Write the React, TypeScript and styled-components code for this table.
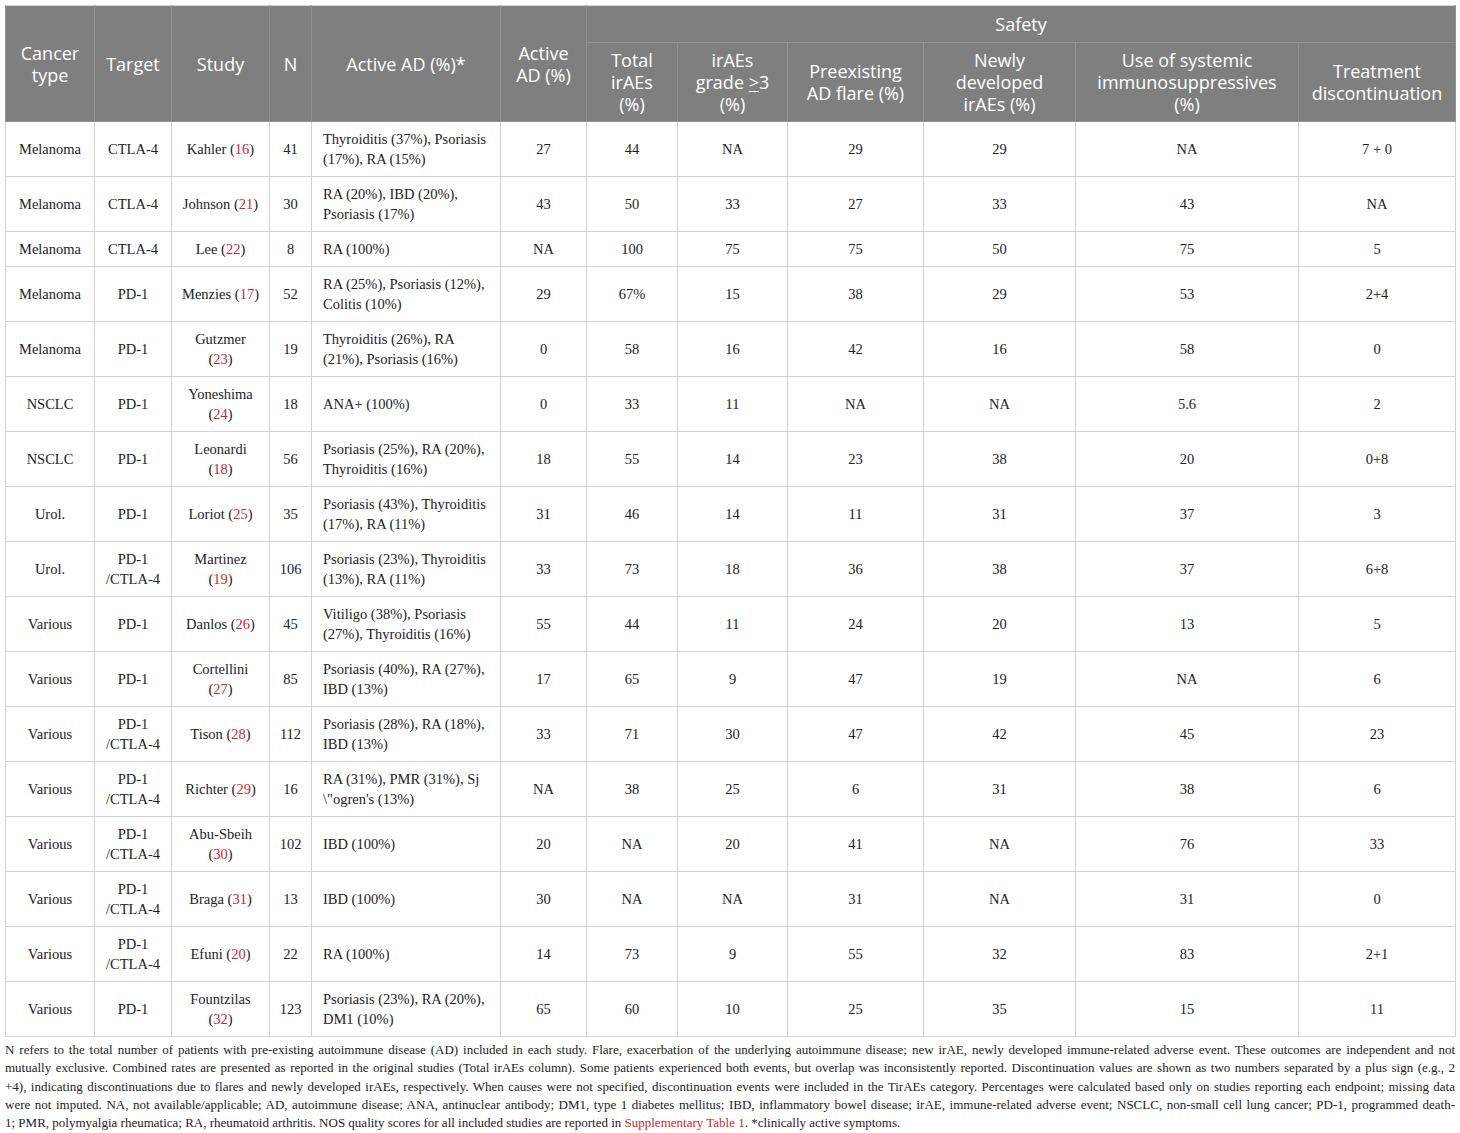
import { FC } from "react";
import styled, { createGlobalStyle } from "styled-components";

const GlobalStyle = createGlobalStyle`
  body {
    margin: 0;
    background: #ffffff;
  }
`;

interface IStudy {
  cancer: string;
  target: string[];
  study: string;
  ref: number;
  splitStudy?: boolean;
  n: number;
  active: string[];
  activePct: string;
  total: string;
  grade3: string;
  flare: string;
  newly: string;
  immuno: string;
  discontinuation: string;
}

const STUDIES: IStudy[] = [
  { cancer: "Melanoma", target: ["CTLA-4"], study: "Kahler", ref: 16, n: 41, active: ["Thyroiditis (37%), Psoriasis", "(17%), RA (15%)"], activePct: "27", total: "44", grade3: "NA", flare: "29", newly: "29", immuno: "NA", discontinuation: "7 + 0" },
  { cancer: "Melanoma", target: ["CTLA-4"], study: "Johnson", ref: 21, n: 30, active: ["RA (20%), IBD (20%),", "Psoriasis (17%)"], activePct: "43", total: "50", grade3: "33", flare: "27", newly: "33", immuno: "43", discontinuation: "NA" },
  { cancer: "Melanoma", target: ["CTLA-4"], study: "Lee", ref: 22, n: 8, active: ["RA (100%)"], activePct: "NA", total: "100", grade3: "75", flare: "75", newly: "50", immuno: "75", discontinuation: "5" },
  { cancer: "Melanoma", target: ["PD-1"], study: "Menzies", ref: 17, n: 52, active: ["RA (25%), Psoriasis (12%),", "Colitis (10%)"], activePct: "29", total: "67%", grade3: "15", flare: "38", newly: "29", immuno: "53", discontinuation: "2+4" },
  { cancer: "Melanoma", target: ["PD-1"], study: "Gutzmer", ref: 23, splitStudy: true, n: 19, active: ["Thyroiditis (26%), RA", "(21%), Psoriasis (16%)"], activePct: "0", total: "58", grade3: "16", flare: "42", newly: "16", immuno: "58", discontinuation: "0" },
  { cancer: "NSCLC", target: ["PD-1"], study: "Yoneshima", ref: 24, splitStudy: true, n: 18, active: ["ANA+ (100%)"], activePct: "0", total: "33", grade3: "11", flare: "NA", newly: "NA", immuno: "5.6", discontinuation: "2" },
  { cancer: "NSCLC", target: ["PD-1"], study: "Leonardi", ref: 18, splitStudy: true, n: 56, active: ["Psoriasis (25%), RA (20%),", "Thyroiditis (16%)"], activePct: "18", total: "55", grade3: "14", flare: "23", newly: "38", immuno: "20", discontinuation: "0+8" },
  { cancer: "Urol.", target: ["PD-1"], study: "Loriot", ref: 25, n: 35, active: ["Psoriasis (43%), Thyroiditis", "(17%), RA (11%)"], activePct: "31", total: "46", grade3: "14", flare: "11", newly: "31", immuno: "37", discontinuation: "3" },
  { cancer: "Urol.", target: ["PD-1", "/CTLA-4"], study: "Martinez", ref: 19, splitStudy: true, n: 106, active: ["Psoriasis (23%), Thyroiditis", "(13%), RA (11%)"], activePct: "33", total: "73", grade3: "18", flare: "36", newly: "38", immuno: "37", discontinuation: "6+8" },
  { cancer: "Various", target: ["PD-1"], study: "Danlos", ref: 26, n: 45, active: ["Vitiligo (38%), Psoriasis", "(27%), Thyroiditis (16%)"], activePct: "55", total: "44", grade3: "11", flare: "24", newly: "20", immuno: "13", discontinuation: "5" },
  { cancer: "Various", target: ["PD-1"], study: "Cortellini", ref: 27, splitStudy: true, n: 85, active: ["Psoriasis (40%), RA (27%),", "IBD (13%)"], activePct: "17", total: "65", grade3: "9", flare: "47", newly: "19", immuno: "NA", discontinuation: "6" },
  { cancer: "Various", target: ["PD-1", "/CTLA-4"], study: "Tison", ref: 28, n: 112, active: ["Psoriasis (28%), RA (18%),", "IBD (13%)"], activePct: "33", total: "71", grade3: "30", flare: "47", newly: "42", immuno: "45", discontinuation: "23" },
  { cancer: "Various", target: ["PD-1", "/CTLA-4"], study: "Richter", ref: 29, n: 16, active: ["RA (31%), PMR (31%), Sj", "\\\"ogren's (13%)"], activePct: "NA", total: "38", grade3: "25", flare: "6", newly: "31", immuno: "38", discontinuation: "6" },
  { cancer: "Various", target: ["PD-1", "/CTLA-4"], study: "Abu-Sbeih", ref: 30, splitStudy: true, n: 102, active: ["IBD (100%)"], activePct: "20", total: "NA", grade3: "20", flare: "41", newly: "NA", immuno: "76", discontinuation: "33" },
  { cancer: "Various", target: ["PD-1", "/CTLA-4"], study: "Braga", ref: 31, n: 13, active: ["IBD (100%)"], activePct: "30", total: "NA", grade3: "NA", flare: "31", newly: "NA", immuno: "31", discontinuation: "0" },
  { cancer: "Various", target: ["PD-1", "/CTLA-4"], study: "Efuni", ref: 20, n: 22, active: ["RA (100%)"], activePct: "14", total: "73", grade3: "9", flare: "55", newly: "32", immuno: "83", discontinuation: "2+1" },
  { cancer: "Various", target: ["PD-1"], study: "Fountzilas", ref: 32, splitStudy: true, n: 123, active: ["Psoriasis (23%), RA (20%),", "DM1 (10%)"], activePct: "65", total: "60", grade3: "10", flare: "25", newly: "35", immuno: "15", discontinuation: "11" },
];

const COLUMNS = [89, 77, 98, 42, 189, 86, 91, 110, 136, 152, 223, 157];

const Lines: FC<{ lines: string[] }> = ({ lines }) => (
  <>
    {lines.map((line, i) => (
      <Line key={i}>{line}</Line>
    ))}
  </>
);

const App: FC = () => {
  return (
    <Page>
      <GlobalStyle />
      <Table>
        <colgroup>
          {COLUMNS.map((w, i) => (
            <col key={i} style={{ width: w }} />
          ))}
        </colgroup>
        <thead>
          <tr>
            <HeadCell rowSpan={2}>
              <Lines lines={["Cancer", "type"]} />
            </HeadCell>
            <HeadCell rowSpan={2}>Target</HeadCell>
            <HeadCell rowSpan={2}>Study</HeadCell>
            <HeadCell rowSpan={2}>N</HeadCell>
            <HeadCell rowSpan={2}>Active AD (%)*</HeadCell>
            <HeadCell rowSpan={2}>
              <Lines lines={["Active", "AD (%)"]} />
            </HeadCell>
            <GroupCell colSpan={6}>Safety</GroupCell>
          </tr>
          <tr>
            <HeadCell>
              <Lines lines={["Total", "irAEs", "(%)"]} />
            </HeadCell>
            <HeadCell>
              <Line>irAEs</Line>
              <Line>
                grade <Under>&gt;</Under>3
              </Line>
              <Line>(%)</Line>
            </HeadCell>
            <HeadCell>
              <Lines lines={["Preexisting", "AD flare (%)"]} />
            </HeadCell>
            <HeadCell>
              <Lines lines={["Newly", "developed", "irAEs (%)"]} />
            </HeadCell>
            <HeadCell>
              <Lines lines={["Use of systemic", "immunosuppressives", "(%)"]} />
            </HeadCell>
            <HeadCell>
              <Lines lines={["Treatment", "discontinuation"]} />
            </HeadCell>
          </tr>
        </thead>
        <tbody>
          {STUDIES.map((s, index) => (
            <tr key={index}>
              <Cell>{s.cancer}</Cell>
              <Cell>
                <Lines lines={s.target} />
              </Cell>
              <Cell>
                {s.splitStudy ? (
                  <>
                    <Line>{s.study}</Line>
                    <Line>
                      (<Ref>{s.ref}</Ref>)
                    </Line>
                  </>
                ) : (
                  <Line>
                    {s.study} (<Ref>{s.ref}</Ref>)
                  </Line>
                )}
              </Cell>
              <Cell>{s.n}</Cell>
              <Cell $left>
                <Lines lines={s.active} />
              </Cell>
              <Cell>{s.activePct}</Cell>
              <Cell>{s.total}</Cell>
              <Cell>{s.grade3}</Cell>
              <Cell>{s.flare}</Cell>
              <Cell>{s.newly}</Cell>
              <Cell>{s.immuno}</Cell>
              <Cell>{s.discontinuation}</Cell>
            </tr>
          ))}
        </tbody>
      </Table>
      <Footnote>
        <FootLine>
          N refers to the total number of patients with pre-existing autoimmune disease (AD) included in each study. Flare, exacerbation of the underlying autoimmune disease; new irAE, newly developed immune-related adverse event. These outcomes are independent and not
        </FootLine>
        <FootLine>
          mutually exclusive. Combined rates are presented as reported in the original studies (Total irAEs column). Some patients experienced both events, but overlap was inconsistently reported. Discontinuation values are shown as two numbers separated by a plus sign (e.g., 2
        </FootLine>
        <FootLine>
          +4), indicating discontinuations due to flares and newly developed irAEs, respectively. When causes were not specified, discontinuation events were included in the TirAEs category. Percentages were calculated based only on studies reporting each endpoint; missing data
        </FootLine>
        <FootLine>
          were not imputed. NA, not available/applicable; AD, autoimmune disease; ANA, antinuclear antibody; DM1, type 1 diabetes mellitus; IBD, inflammatory bowel disease; irAE, immune-related adverse event; NSCLC, non-small cell lung cancer; PD-1, programmed death-
        </FootLine>
        <FootLine $last>
          1; PMR, polymyalgia rheumatica; RA, rheumatoid arthritis. NOS quality scores for all included studies are reported in <Ref>Supplementary Table 1</Ref>. *clinically active symptoms.
        </FootLine>
      </Footnote>
    </Page>
  );
};

const Page = styled.div`
  padding: 5px;
  width: 1450px;
`;

const Table = styled.table`
  width: 1450px;
  table-layout: fixed;
  border-collapse: collapse;
  border: 1px solid #d2d2d2;
`;

const HeadCell = styled.th`
  background: #7f7f7f;
  color: #ffffff;
  font-family: "Open Sans", "DejaVu Sans", sans-serif;
  font-size: 18px;
  font-weight: 400;
  line-height: 22px;
  text-align: center;
  vertical-align: middle;
  padding: 0 4px;
  border: 1px solid #929292;
  border-top: none;
  height: 78px;
`;

const GroupCell = styled(HeadCell)`
  height: 36px;
  border-top: none;
`;

const Line = styled.span`
  display: block;
`;

const Under = styled.span`
  text-decoration: underline;
  text-underline-offset: 2px;
`;

const Cell = styled.td<{ $left?: boolean }>`
  font-family: "Liberation Serif", "Times New Roman", serif;
  font-size: 14.5px;
  line-height: 20px;
  color: #222222;
  text-align: ${(p) => (p.$left ? "left" : "center")};
  vertical-align: middle;
  padding: ${(p) => (p.$left ? "7px 4px 7px 11px" : "7px 3px")};
  border: 1px solid #d2d2d2;
`;

const Ref = styled.span`
  color: #d0262f;
`;

const Footnote = styled.div`
  padding-top: 4px;
  font-family: "Liberation Serif", "Times New Roman", serif;
  font-size: 13px;
  line-height: 18.3px;
  color: #222222;
`;

const FootLine = styled.div<{ $last?: boolean }>`
  text-align: ${(p) => (p.$last ? "left" : "justify")};
  text-align-last: ${(p) => (p.$last ? "left" : "justify")};
`;

export default App;
